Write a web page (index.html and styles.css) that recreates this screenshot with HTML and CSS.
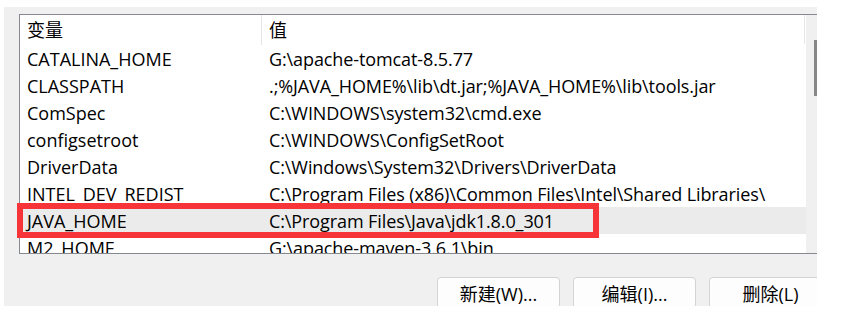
FILE: index.html
```html
<!DOCTYPE html>
<html lang="zh-CN">
<head>
    <meta charset="UTF-8">
    <title>环境变量</title>
    <link rel="stylesheet" href="styles.css">
</head>
<body>

    <!-- Dialog panel -->
    <div class="panel">

        <!-- Variable list -->
        <div class="list">
            <div class="list-body">
                <div class="list-head">
                    <div class="col-name">变量</div>
                    <div class="col-value">值</div>
                </div>
                <div class="row"><div class="col-name">CATALINA_HOME</div><div class="col-value">G:\apache-tomcat-8.5.77</div></div>
                <div class="row"><div class="col-name">CLASSPATH</div><div class="col-value">.;%JAVA_HOME%\lib\dt.jar;%JAVA_HOME%\lib\tools.jar</div></div>
                <div class="row"><div class="col-name">ComSpec</div><div class="col-value">C:\WINDOWS\system32\cmd.exe</div></div>
                <div class="row"><div class="col-name">configsetroot</div><div class="col-value">C:\WINDOWS\ConfigSetRoot</div></div>
                <div class="row"><div class="col-name">DriverData</div><div class="col-value">C:\Windows\System32\Drivers\DriverData</div></div>
                <div class="row"><div class="col-name">INTEL_DEV_REDIST</div><div class="col-value">C:\Program Files (x86)\Common Files\Intel\Shared Libraries\</div></div>
                <div class="row selected"><div class="col-name">JAVA_HOME</div><div class="col-value">C:\Program Files\Java\jdk1.8.0_301</div></div>
                <div class="row"><div class="col-name">M2_HOME</div><div class="col-value">G:\apache-maven-3.6.1\bin</div></div>
            </div>
            <div class="scrollbar"><div class="thumb"></div></div>
        </div>

        <!-- Buttons -->
        <div class="actions">
            <button class="btn">新建(W)...</button>
            <button class="btn">编辑(I)...</button>
            <button class="btn">删除(L)</button>
        </div>
    </div>

    <!-- Red annotation frame -->
    <div class="mark"></div>

</body>
</html>
```

FILE: styles.css
```css
/* Page */
body {
    margin: 0;
    background-color: #fff;
    font-family: "Open Sans", "Noto Sans CJK SC", sans-serif;
    color: #000;
    position: relative;
    height: 325px;
    overflow: hidden;
}

/* Gray dialog panel */
.panel {
    margin: 7px 0 0 4px;
    width: 813px;
    height: 299px;
    background-color: #f0f0f0;
    overflow: hidden;
    box-sizing: border-box;
    padding: 7px 0 0 15px;
}

/* List box */
.list {
    display: flex;
    width: 805px;
    height: 240px;
    border: 1px solid #868a90;
    box-sizing: border-box;
    background-color: #fff;
    overflow: hidden;
}

.list-body {
    width: 786px;
    flex: none;
}

.list-head, .row {
    display: flex;
    font-size: 18px;
    white-space: nowrap;
}

.list-head {
    height: 30px;
    line-height: 31px;
}

.list-head .col-name {
    border-right: 1px solid #e5e5e5;
}

.list-head .col-value {
    width: 535px;
    border-right: 1px solid #e5e5e5;
    height: 29px;
}

.col-name {
    width: 242px;
    padding-left: 7px;
    box-sizing: border-box;
    flex: none;
}

.col-value {
    padding-left: 7px;
    flex: none;
    letter-spacing: -0.1px;
}

.row {
    height: 27px;
    line-height: 28px;
}

.row.selected {
    background-color: #ebebeb;
}

/* Scrollbar */
.scrollbar {
    width: 17px;
    flex: none;
    background-color: #f0f0f0;
    padding-top: 25px;
}

.thumb {
    margin-left: 8px;
    width: 6px;
    height: 56px;
    background-color: #868686;
}

/* Buttons row */
.actions {
    display: flex;
    gap: 13px;
    margin: 23px 0 0 418px;
}

.btn {
    width: 123px;
    height: 32px;
    flex: none;
    font-family: "Open Sans", "Noto Sans CJK SC", sans-serif;
    font-size: 18px;
    color: #000;
    background-color: #fdfdfd;
    border: 1px solid #d3d3d3;
    border-radius: 4px;
    padding: 0;
}

/* Red highlight frame drawn over the list */
.mark {
    position: absolute;
    left: 17px;
    top: 203px;
    width: 582px;
    height: 35px;
    border: 6px solid #f73538;
    box-sizing: border-box;
}
```
